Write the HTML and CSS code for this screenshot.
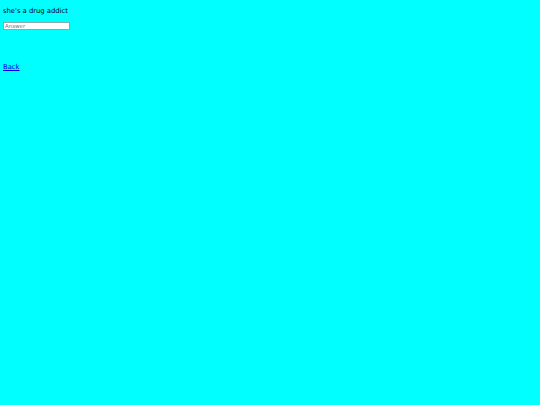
FILE: index.html
```html
<!DOCTYPE html>
<html>
<head>
<meta charset="utf-8">
<link rel="stylesheet" href="styles.css">
</head>
<body class="page">
<p class="question">she's a drug addict</p>
<form class="answer-form">
<input class="answer" type="text" placeholder="Answer">
</form>
<a class="back" href="#">Back</a>
</body>
</html>
```
FILE: styles.css
```css
html, body { background: #00ffff; }
.page {
  margin: 3px;
  font-family: "DejaVu Sans", sans-serif;
  font-size: 6.8px;
  color: #000;
}
.question { margin: 4px 0 0; line-height: 9px; }
.answer-form { margin: 6px 0 0; }
.answer {
  display: block;
  width: 63px;
  height: 6px;
  padding: 0 1px;
  border: 1px solid #8aa;
  font-family: "DejaVu Sans", sans-serif;
  font-size: 5.5px;
  background: #fff;
  box-sizing: content-box;
}
.answer::placeholder { color: #777; }
.back {
  display: inline-block;
  margin-top: 33px;
  color: #0000ee;
  line-height: 9px;
}
```
